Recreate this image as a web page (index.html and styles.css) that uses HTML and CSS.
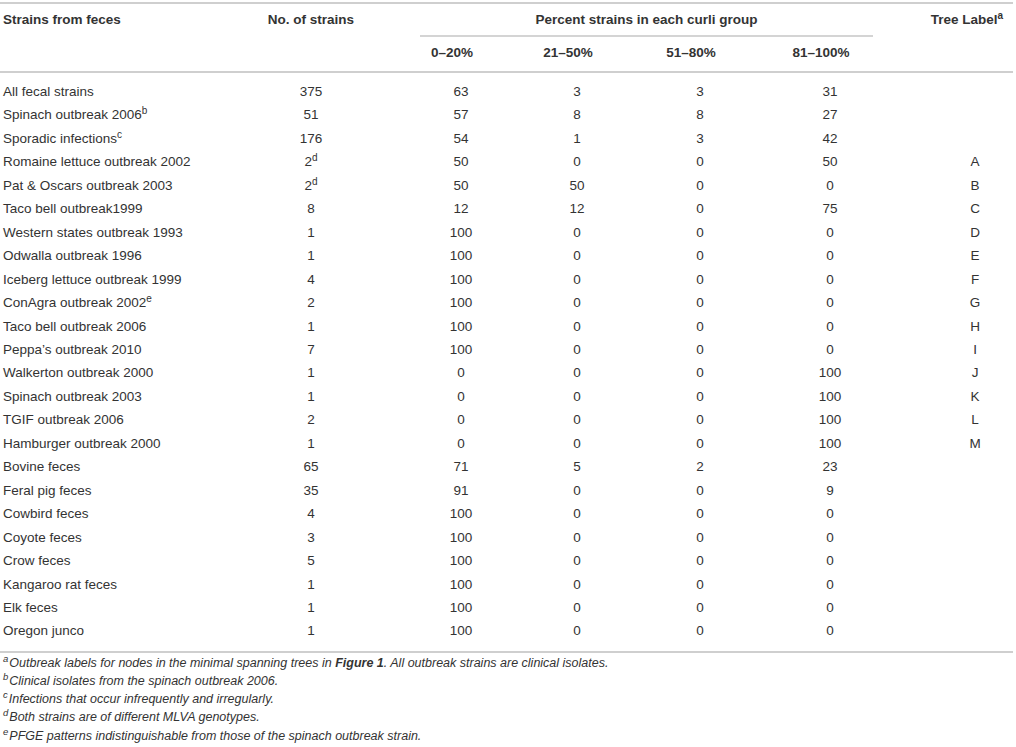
FILE: index.html
```html
<!DOCTYPE html>
<html lang="en">
<head>
<meta charset="utf-8">
<title>Curli groups of fecal strains</title>
<link rel="stylesheet" href="styles.css">
</head>
<body>
<div class="wrap">
<table class="data">
  <colgroup>
    <col class="c1"><col class="c2"><col class="c3"><col class="c4"><col class="c5"><col class="c6"><col class="c7">
  </colgroup>
  <thead>
    <tr class="h1">
      <th rowspan="2" class="left span">Strains from feces</th>
      <th rowspan="2" class="mid span">No. of strains</th>
      <th colspan="4" class="group"><div class="group-in">Percent strains in each curli group</div></th>
      <th rowspan="2" class="tree span">Tree Label<sup>a</sup></th>
    </tr>
    <tr class="h2">
      <th class="sub">0–20%</th>
      <th class="sub">21–50%</th>
      <th class="sub">51–80%</th>
      <th class="sub">81–100%</th>
    </tr>
  </thead>
  <tbody>
    <tr class="first"><td>All fecal strains</td><td>375</td><td>63</td><td>3</td><td>3</td><td>31</td><td></td></tr>
    <tr><td>Spinach outbreak 2006<sup>b</sup></td><td>51</td><td>57</td><td>8</td><td>8</td><td>27</td><td></td></tr>
    <tr><td>Sporadic infections<sup>c</sup></td><td>176</td><td>54</td><td>1</td><td>3</td><td>42</td><td></td></tr>
    <tr><td>Romaine lettuce outbreak 2002</td><td>2<sup>d</sup></td><td>50</td><td>0</td><td>0</td><td>50</td><td>A</td></tr>
    <tr><td>Pat &amp; Oscars outbreak 2003</td><td>2<sup>d</sup></td><td>50</td><td>50</td><td>0</td><td>0</td><td>B</td></tr>
    <tr><td>Taco bell outbreak1999</td><td>8</td><td>12</td><td>12</td><td>0</td><td>75</td><td>C</td></tr>
    <tr><td>Western states outbreak 1993</td><td>1</td><td>100</td><td>0</td><td>0</td><td>0</td><td>D</td></tr>
    <tr><td>Odwalla outbreak 1996</td><td>1</td><td>100</td><td>0</td><td>0</td><td>0</td><td>E</td></tr>
    <tr><td>Iceberg lettuce outbreak 1999</td><td>4</td><td>100</td><td>0</td><td>0</td><td>0</td><td>F</td></tr>
    <tr><td>ConAgra outbreak 2002<sup>e</sup></td><td>2</td><td>100</td><td>0</td><td>0</td><td>0</td><td>G</td></tr>
    <tr><td>Taco bell outbreak 2006</td><td>1</td><td>100</td><td>0</td><td>0</td><td>0</td><td>H</td></tr>
    <tr><td>Peppa’s outbreak 2010</td><td>7</td><td>100</td><td>0</td><td>0</td><td>0</td><td>I</td></tr>
    <tr><td>Walkerton outbreak 2000</td><td>1</td><td>0</td><td>0</td><td>0</td><td>100</td><td>J</td></tr>
    <tr><td>Spinach outbreak 2003</td><td>1</td><td>0</td><td>0</td><td>0</td><td>100</td><td>K</td></tr>
    <tr><td>TGIF outbreak 2006</td><td>2</td><td>0</td><td>0</td><td>0</td><td>100</td><td>L</td></tr>
    <tr><td>Hamburger outbreak 2000</td><td>1</td><td>0</td><td>0</td><td>0</td><td>100</td><td>M</td></tr>
    <tr><td>Bovine feces</td><td>65</td><td>71</td><td>5</td><td>2</td><td>23</td><td></td></tr>
    <tr><td>Feral pig feces</td><td>35</td><td>91</td><td>0</td><td>0</td><td>9</td><td></td></tr>
    <tr><td>Cowbird feces</td><td>4</td><td>100</td><td>0</td><td>0</td><td>0</td><td></td></tr>
    <tr><td>Coyote feces</td><td>3</td><td>100</td><td>0</td><td>0</td><td>0</td><td></td></tr>
    <tr><td>Crow feces</td><td>5</td><td>100</td><td>0</td><td>0</td><td>0</td><td></td></tr>
    <tr><td>Kangaroo rat feces</td><td>1</td><td>100</td><td>0</td><td>0</td><td>0</td><td></td></tr>
    <tr><td>Elk feces</td><td>1</td><td>100</td><td>0</td><td>0</td><td>0</td><td></td></tr>
    <tr class="last"><td>Oregon junco</td><td>1</td><td>100</td><td>0</td><td>0</td><td>0</td><td></td></tr>
  </tbody>
</table>
<div class="notes">
  <p><sup>a</sup>Outbreak labels for nodes in the minimal spanning trees in <b>Figure 1</b>. All outbreak strains are clinical isolates.</p>
  <p><sup>b</sup>Clinical isolates from the spinach outbreak 2006.</p>
  <p><sup>c</sup>Infections that occur infrequently and irregularly.</p>
  <p><sup>d</sup>Both strains are of different MLVA genotypes.</p>
  <p><sup>e</sup>PFGE patterns indistinguishable from those of the spinach outbreak strain.</p>
</div>
</div>
</body>
</html>
```

FILE: styles.css
```css
html, body {
  margin: 0;
  padding: 0;
  background: #ffffff;
}

body {
  font-family: "Liberation Sans", Arial, Helvetica, sans-serif;
  color: #333333;
  font-size: 13.5px;
}

.wrap {
  padding-top: 2px;
}

.data {
  width: 1013px;
  border-collapse: separate;
  border-spacing: 0;
  table-layout: fixed;
  font-size: 13.5px;
}

.c1 { width: 240px; }
.c2 { width: 142px; }
.c3 { width: 158px; }
.c4 { width: 74px; }
.c5 { width: 172px; }
.c6 { width: 88px; }
.c7 { width: 139px; }

.data th {
  font-weight: bold;
  line-height: 16px;
  padding: 0;
  white-space: nowrap;
}

.h1 th {
  border-top: 2px solid #cfcfcf;
}

.span {
  vertical-align: top;
  padding-top: 8px !important;
  border-bottom: 2px solid #cfcfcf;
}

.left {
  text-align: left;
  padding-left: 3px !important;
}

.mid {
  text-align: center;
}

.tree {
  text-align: right;
  padding-right: 10px !important;
}

.group {
  text-align: center;
  padding: 8px 1px 0 38px !important;
}

.group-in {
  padding-bottom: 7px;
  border-bottom: 2px solid #d4d4d4;
}

.sub {
  text-align: center;
  padding: 8px 18px 10px 0 !important;
  border-bottom: 2px solid #cfcfcf;
}

.data td {
  line-height: 23.45px;
  padding: 0;
  text-align: center;
  white-space: nowrap;
}

.data td:first-child {
  text-align: left;
  padding-left: 3px;
}

.data td:last-child {
  padding-left: 63px;
}

.first td {
  padding-top: 7px;
}

.last td {
  padding-bottom: 8px;
  border-bottom: 2px solid #cfcfcf;
}

sup {
  font-size: 10px;
  line-height: 0;
  vertical-align: 5px;
}

.notes {
  margin-top: 1px;
  padding-left: 3px;
  font-size: 12.5px;
}

.notes p {
  margin: 0;
  font-style: italic;
  line-height: 18.2px;
  white-space: nowrap;
}

.notes sup {
  font-size: 9.5px;
  margin-right: 1px;
}
```
